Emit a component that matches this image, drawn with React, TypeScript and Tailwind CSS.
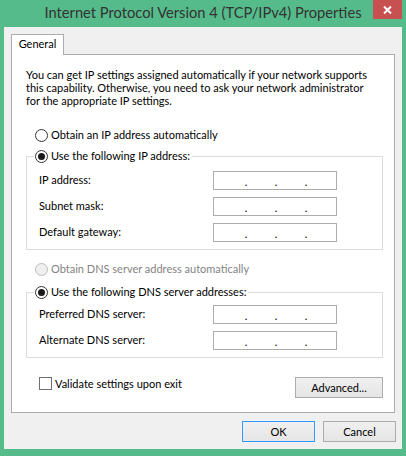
import React from "react";

const Radio = ({ checked = false, disabled = false }: { checked?: boolean; disabled?: boolean }) => (
  <span
    className={
      disabled
        ? "w-[13px] h-[13px] rounded-full border border-[#bcbcbc] bg-[#f0f0f0] flex items-center justify-center shrink-0"
        : "w-[13px] h-[13px] rounded-full border border-[#333333] bg-white flex items-center justify-center shrink-0"
    }
  >
    {checked && <span className="w-[7px] h-[7px] rounded-full bg-[#1a1a1a]" />}
  </span>
);

const IpBox = () => (
  <div className="w-[124px] h-[19px] border border-[#acacac] bg-white flex items-center pl-[30px] gap-[26px] leading-[17px] pt-[1px]">
    <span className="w-[4px] text-center">.</span>
    <span className="w-[4px] text-center">.</span>
    <span className="w-[4px] text-center">.</span>
  </div>
);

const Field = ({ label }: { label: string }) => (
  <>
    <div className="flex items-center whitespace-nowrap">{label}</div>
    <IpBox />
  </>
);

const Button = ({ children, primary = false, w }: { children: React.ReactNode; primary?: boolean; w: string }) => (
  <div
    className={
      (primary ? "border-[#3399ff] " : "border-[#acacac] ") +
      w +
      " h-[21px] border bg-gradient-to-b from-[#f0f0f0] to-[#e5e5e5] flex items-center justify-center leading-[19px]"
    }
  >
    {children}
  </div>
);

export default function App() {
  return (
    <div className="w-[406px] h-[456px] bg-[#55bb8a] flex flex-col font-[Lato,sans-serif] text-[11px] text-black">
      {/* title bar */}
      <div className="h-[27px] grid grid-cols-[1fr_auto_1fr]">
        <div />
        <div className="text-[14.7px] leading-[24px] text-[#333333] whitespace-nowrap">
          Internet Protocol Version 4 (TCP/IPv4) Properties
        </div>
        <div className="flex justify-end items-start pr-[4px]">
          <div className="w-[29px] h-[19px] bg-[#c75050] flex items-center justify-center">
            <svg width="9" height="8" viewBox="0 0 9 8">
              <path d="M1 0.5 L8 7.5 M8 0.5 L1 7.5" stroke="white" strokeWidth="2" />
            </svg>
          </div>
        </div>
      </div>

      {/* client */}
      <div className="mx-[4px] h-[422px] bg-[#f0f0f0] px-[7px] pt-[7px] flex flex-col">
        <div className="flex">
          <div className="relative z-10 -mb-px w-[53px] h-[21px] border border-b-0 border-[#acacac] bg-white text-center leading-[18px]">
            General
          </div>
        </div>

        <div className="h-[359px] border border-[#acacac] bg-white pl-[14px] pr-[11px] flex flex-col">
          <p className="mt-[13px] leading-[13px] whitespace-nowrap">
            You can get IP settings assigned automatically if your network supports
            <br />
            this capability. Otherwise, you need to ask your network administrator
            <br />
            for the appropriate IP settings.
          </p>

          <label className="mt-[20px] h-[16px] pl-[9px] flex items-center gap-[3px]">
            <Radio />
            <span>Obtain an IP address automatically</span>
          </label>

          <fieldset className="mt-[5px] border border-[#dcdcdc] px-[7px] pb-[7px]">
            <legend className="px-[1px] h-[16px] flex items-center gap-[3px]">
              <Radio checked />
              <span className="pr-[1px]">Use the following IP address:</span>
            </legend>
            <div className="mt-[7px] pl-[5px] grid grid-cols-[174px_124px] gap-y-[7px]">
              <Field label="IP address:" />
              <Field label="Subnet mask:" />
              <Field label="Default gateway:" />
            </div>
          </fieldset>

          <label className="mt-[11px] h-[16px] pl-[9px] flex items-center gap-[3px] text-[#838383]">
            <Radio disabled />
            <span>Obtain DNS server address automatically</span>
          </label>

          <fieldset className="mt-[7px] border border-[#dcdcdc] px-[7px] pb-[7px]">
            <legend className="px-[1px] h-[16px] flex items-center gap-[3px]">
              <Radio checked />
              <span className="pr-[1px]">Use the following DNS server addresses:</span>
            </legend>
            <div className="mt-[5px] pl-[5px] grid grid-cols-[174px_124px] gap-y-[7px]">
              <Field label="Preferred DNS server:" />
              <Field label="Alternate DNS server:" />
            </div>
          </fieldset>

          <div className="mt-[19px] flex items-start">
            <label className="pl-[13px] flex items-start gap-[3px] leading-[13px]">
              <span className="w-[13px] h-[13px] border border-[#707070] bg-white shrink-0" />
              <span>Validate settings upon exit</span>
            </label>
            <div className="ml-auto">
              <Button w="w-[88px]">Advanced...</Button>
            </div>
          </div>
        </div>

        <div className="mt-[8px] -mr-px flex justify-end gap-[8px]">
          <Button primary w="w-[73px]">
            OK
          </Button>
          <Button w="w-[73px]">Cancel</Button>
        </div>
      </div>
    </div>
  );
}
